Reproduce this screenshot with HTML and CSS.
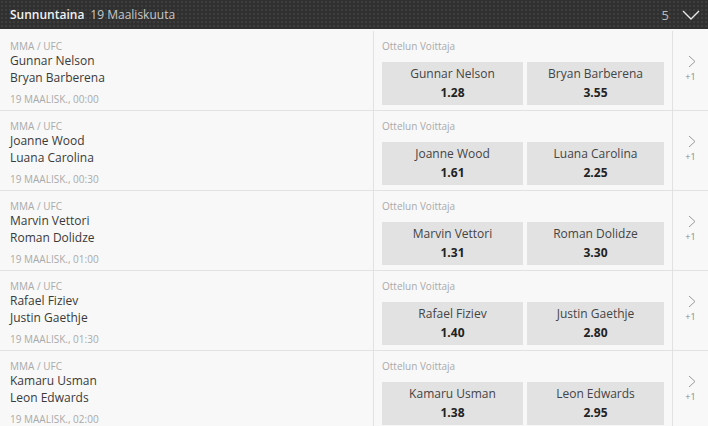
FILE: index.html
```html
<!DOCTYPE html>
<html>
<head>
<meta charset="utf-8">
<link rel="stylesheet" href="styles.css">
</head>
<body>
<div class="header">
  <div class="title"><span class="day">Sunnuntaina</span><span class="date">19 Maaliskuuta</span></div>
  <div class="count">5</div>
  <svg class="toggle" width="18" height="10" viewBox="0 0 18 10"><path d="M1 1 L9 9 L17 1" fill="none" stroke="#e8e8e8" stroke-width="1.4"/></svg>
</div>
<div class="list">
  <div class="event">
    <div class="info">
      <div class="league">MMA / UFC</div>
      <div class="team">Gunnar Nelson</div>
      <div class="team">Bryan Barberena</div>
      <div class="time">19 MAALISK., 00:00</div>
    </div>
    <div class="market">
      <div class="mname">Ottelun Voittaja</div>
      <div class="odds">
        <div class="btn"><span class="bn">Gunnar Nelson</span><span class="bo">1.28</span></div>
        <div class="btn"><span class="bn">Bryan Barberena</span><span class="bo">3.55</span></div>
      </div>
    </div>
    <div class="more"><svg width="8" height="13" viewBox="0 0 8 13"><path d="M1 1 L7 6.5 L1 12" fill="none" stroke="#999" stroke-width="1"/></svg><span class="plus">+1</span></div>
  </div>
  <div class="event">
    <div class="info">
      <div class="league">MMA / UFC</div>
      <div class="team">Joanne Wood</div>
      <div class="team">Luana Carolina</div>
      <div class="time">19 MAALISK., 00:30</div>
    </div>
    <div class="market">
      <div class="mname">Ottelun Voittaja</div>
      <div class="odds">
        <div class="btn"><span class="bn">Joanne Wood</span><span class="bo">1.61</span></div>
        <div class="btn"><span class="bn">Luana Carolina</span><span class="bo">2.25</span></div>
      </div>
    </div>
    <div class="more"><svg width="8" height="13" viewBox="0 0 8 13"><path d="M1 1 L7 6.5 L1 12" fill="none" stroke="#999" stroke-width="1"/></svg><span class="plus">+1</span></div>
  </div>
  <div class="event">
    <div class="info">
      <div class="league">MMA / UFC</div>
      <div class="team">Marvin Vettori</div>
      <div class="team">Roman Dolidze</div>
      <div class="time">19 MAALISK., 01:00</div>
    </div>
    <div class="market">
      <div class="mname">Ottelun Voittaja</div>
      <div class="odds">
        <div class="btn"><span class="bn">Marvin Vettori</span><span class="bo">1.31</span></div>
        <div class="btn"><span class="bn">Roman Dolidze</span><span class="bo">3.30</span></div>
      </div>
    </div>
    <div class="more"><svg width="8" height="13" viewBox="0 0 8 13"><path d="M1 1 L7 6.5 L1 12" fill="none" stroke="#999" stroke-width="1"/></svg><span class="plus">+1</span></div>
  </div>
  <div class="event">
    <div class="info">
      <div class="league">MMA / UFC</div>
      <div class="team">Rafael Fiziev</div>
      <div class="team">Justin Gaethje</div>
      <div class="time">19 MAALISK., 01:30</div>
    </div>
    <div class="market">
      <div class="mname">Ottelun Voittaja</div>
      <div class="odds">
        <div class="btn"><span class="bn">Rafael Fiziev</span><span class="bo">1.40</span></div>
        <div class="btn"><span class="bn">Justin Gaethje</span><span class="bo">2.80</span></div>
      </div>
    </div>
    <div class="more"><svg width="8" height="13" viewBox="0 0 8 13"><path d="M1 1 L7 6.5 L1 12" fill="none" stroke="#999" stroke-width="1"/></svg><span class="plus">+1</span></div>
  </div>
  <div class="event">
    <div class="info">
      <div class="league">MMA / UFC</div>
      <div class="team">Kamaru Usman</div>
      <div class="team">Leon Edwards</div>
      <div class="time">19 MAALISK., 02:00</div>
    </div>
    <div class="market">
      <div class="mname">Ottelun Voittaja</div>
      <div class="odds">
        <div class="btn"><span class="bn">Kamaru Usman</span><span class="bo">1.38</span></div>
        <div class="btn"><span class="bn">Leon Edwards</span><span class="bo">2.95</span></div>
      </div>
    </div>
    <div class="more"><svg width="8" height="13" viewBox="0 0 8 13"><path d="M1 1 L7 6.5 L1 12" fill="none" stroke="#999" stroke-width="1"/></svg><span class="plus">+1</span></div>
  </div>
</div>
</body>
</html>
```
FILE: styles.css
```css
* { box-sizing: border-box; }
html, body { margin: 0; padding: 0; }
body {
  width: 708px;
  height: 426px;
  overflow: hidden;
  background: #f8f8f8;
  font-family: "Open Sans", "Liberation Sans", sans-serif;
  color: #333;
}
.header {
  height: 29px;
  display: flex;
  align-items: center;
  padding: 0 8px 0 10px;
  background-color: #303030;
  background-image: radial-gradient(circle, #3e3e3e 0.8px, transparent 1px);
  background-size: 4px 4px;
}
.title { flex: 1; font-size: 12px; }
.day { color: #f2f2f2; font-weight: 600; margin-right: 6px; }
.date { color: #c8c8c8; }
.count { color: #bbb; font-size: 13px; margin-right: 13px; }
.toggle { display: block; }
.list { padding-top: 2px; }
.event {
  height: 80px;
  display: flex;
  border-bottom: 1px solid #e2e2e2;
  background: #f8f8f8;
}
.info {
  width: 374px;
  border-right: 1px solid #e2e2e2;
  padding: 9px 0 0 10px;
}
.league { font-size: 10px; line-height: 12px; color: #aaa; height: 12px; }
.team { font-size: 12px; line-height: 17px; color: #3a3a3a; }
.time { font-size: 10px; line-height: 12px; color: #aaa; margin-top: 7px; }
.market {
  width: 299px;
  border-right: 1px solid #e2e2e2;
  padding: 9px 0 0 8px;
}
.mname { font-size: 10px; line-height: 12px; color: #aaa; height: 22px; }
.odds { display: grid; grid-template-columns: 141px 137px; gap: 4px; }
.btn {
  height: 43px;
  background: #e2e2e2;
  display: flex;
  flex-direction: column;
  align-items: center;
  padding-top: 4px;
}
.bn { font-size: 12px; line-height: 16px; color: #444; }
.bo { font-size: 12px; line-height: 18px; font-weight: 700; color: #222; margin-top: 2px; }
.more {
  flex: 1;
  display: flex;
  flex-direction: column;
  align-items: center;
  padding-top: 24px;
}
.more svg { display: block; margin-left: 2px; }
.plus { font-size: 9px; color: #888; margin-top: 2px; }
```
